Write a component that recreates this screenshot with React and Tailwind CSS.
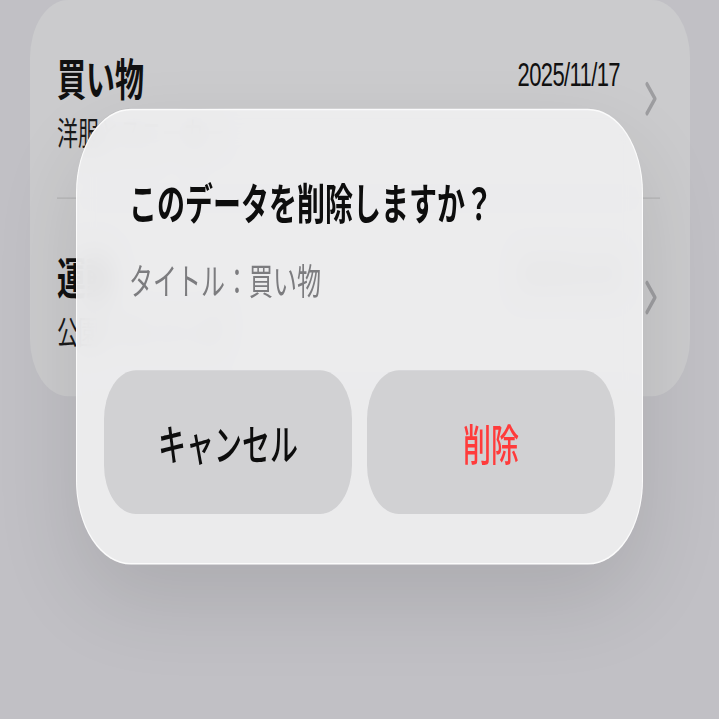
import React from "react"

const rows = [
  { title: "買い物", note: "洋服とスニーカー", date: "2025/11/17" },
  { title: "運動", note: "公園でランニング", date: "2025/11/10" },
]

function Chevron() {
  return (
    <svg width="12" height="23" viewBox="0 0 12 23" fill="none" className="shrink-0">
      <path d="M2 2l8 9.5L2 21" stroke="#9d9da0" strokeWidth="3" strokeLinecap="round" strokeLinejoin="round" />
    </svg>
  )
}

function ListRow({ item }) {
  return (
    <div className="flex h-[129px] items-center pl-[27px] pr-[33px]">
      <div className="min-w-0 flex-1">
        <div className="flex items-start justify-between">
          <p className="text-[29px] font-bold leading-[36px] text-[#111]">{item.title}</p>
          <p className="mt-[2px] font-['Liberation_Sans','Noto_Sans_CJK_JP',sans-serif] text-[22px] leading-[30px] tracking-[-0.6px] text-[#111]">
            {item.date}
          </p>
        </div>
        <p className="mt-[6px] text-[21px] leading-[24px] text-[#1a1a1a] whitespace-nowrap">{item.note}</p>
      </div>
      <div className="ml-[25px]">
        <Chevron />
      </div>
    </div>
  )
}

export default function App() {
  return (
    <div className="h-[719px] w-[719px] overflow-hidden bg-[#c1c0c5] font-['Noto_Sans_CJK_JP',sans-serif]">
      {/* screenshot is stretched vertically, so lay out flat then stretch */}
      <div className="relative h-[470px] origin-top scale-y-[1.53]">
        <div className="px-[29px] pl-[30px]">
          <div className="rounded-[38px] bg-[#cbcbcd]">
            <ListRow item={rows[0]} />
            <div className="ml-[27px] mr-[30px] h-px bg-[#b8b8ba]" />
            <ListRow item={rows[1]} />
          </div>
        </div>

        {/* Confirm dialog */}
        <div className="absolute left-[76px] top-[71px] w-[567px] rounded-[55px] border border-white/80 bg-[#eeeeef]/[0.93] px-[27px] pb-[32px] pt-[42px] shadow-[0_24px_70px_rgba(0,0,0,0.11)] backdrop-blur-[10px]">
          <div className="pl-[25px]">
            <h2 className="text-[28px] font-bold leading-[36px] text-[#0d0d0d]">このデータを削除しますか？</h2>
            <p className="mt-[18px] text-[24px] leading-[30px] text-[#7c7c7f]">タイトル：買い物</p>
          </div>
          <div className="mt-[44px] flex gap-[15px]">
            <button className="flex h-[94px] flex-1 items-center justify-center rounded-[32px] bg-[#d1d1d3] text-[28px] font-medium text-[#0d0d0d]">
              キャンセル
            </button>
            <button className="flex h-[94px] flex-1 items-center justify-center rounded-[32px] bg-[#d1d1d3] text-[28px] font-medium text-[#ff3b3b]">
              削除
            </button>
          </div>
        </div>
      </div>
    </div>
  )
}
